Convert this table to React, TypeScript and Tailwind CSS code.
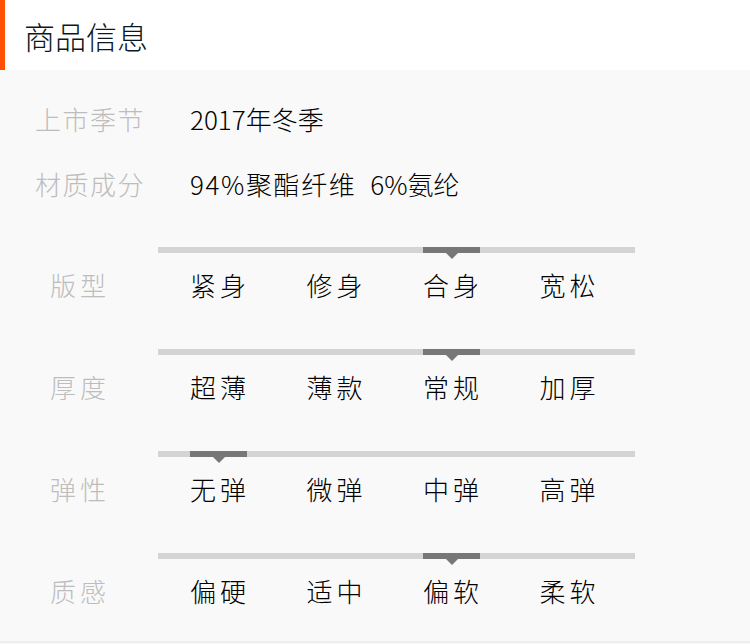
import React from "react";

const font = { fontFamily: '"Noto Sans CJK SC", "Noto Sans", sans-serif' };

const scales = [
  { name: "版型", options: ["紧身", "修身", "合身", "宽松"], active: 2 },
  { name: "厚度", options: ["超薄", "薄款", "常规", "加厚"], active: 2 },
  { name: "弹性", options: ["无弹", "微弹", "中弹", "高弹"], active: 0 },
  { name: "质感", options: ["偏硬", "适中", "偏软", "柔软"], active: 2 },
];

const ScaleRow = ({ name, options, active }: { name: string; options: string[]; active: number }) => {
  return (
    <div className="mt-[46px] first:mt-0">
      <div className="ml-[158px] w-[477px] h-[6px] bg-[#d4d4d4] flex pl-[32px]">
        {options.map((opt, i) => (
          <div key={opt} className="w-[116.5px] shrink-0 h-full">
            {i === active && (
              <div className="relative w-[57px] h-full bg-[#777777]">
                <div className="absolute left-1/2 top-full -translate-x-1/2 w-0 h-0 border-l-[6px] border-r-[6px] border-t-[6px] border-l-transparent border-r-transparent border-t-[#777777]" />
              </div>
            )}
          </div>
        ))}
      </div>
      <div className="flex mt-[14px] text-[26px] leading-[36px] font-light">
        <div className="w-[190px] shrink-0 pl-[50px] text-[#bdbdbd] tracking-[4px]">{name}</div>
        {options.map((opt) => (
          <div key={opt} className="w-[116.5px] shrink-0 text-black tracking-[4px]">
            {opt}
          </div>
        ))}
      </div>
    </div>
  );
};

export default function App() {
  return (
    <div className="w-[750px] h-[644px] bg-[#f9f9f9] overflow-hidden" style={font}>
      <div className="h-[70px] bg-white flex items-center border-l-[5px] border-[#ff5000]">
        <h1 className="ml-[19px] text-[31px] leading-none font-light text-[#0b1722]">商品信息</h1>
      </div>
      <div className="pt-[31px] pb-[32px] border-b-2 border-[#efefef] font-light">
        <div className="flex text-[26px] leading-[36px]">
          <div className="w-[190px] shrink-0 pl-[35px] text-[#bdbdbd] tracking-[1.5px]">上市季节</div>
          <div className="text-black">2017年冬季</div>
        </div>
        <div className="flex mt-[29px] text-[26px] leading-[36px]">
          <div className="w-[190px] shrink-0 pl-[35px] text-[#bdbdbd] tracking-[1.5px]">材质成分</div>
          <div className="text-black">
            <span className="tracking-[1.6px]">94%聚酯纤维</span>
            <span className="ml-[14px]">6%氨纶</span>
          </div>
        </div>
        <div className="mt-[45px]">
          {scales.map((s) => (
            <ScaleRow key={s.name} {...s} />
          ))}
        </div>
      </div>
    </div>
  );
}
